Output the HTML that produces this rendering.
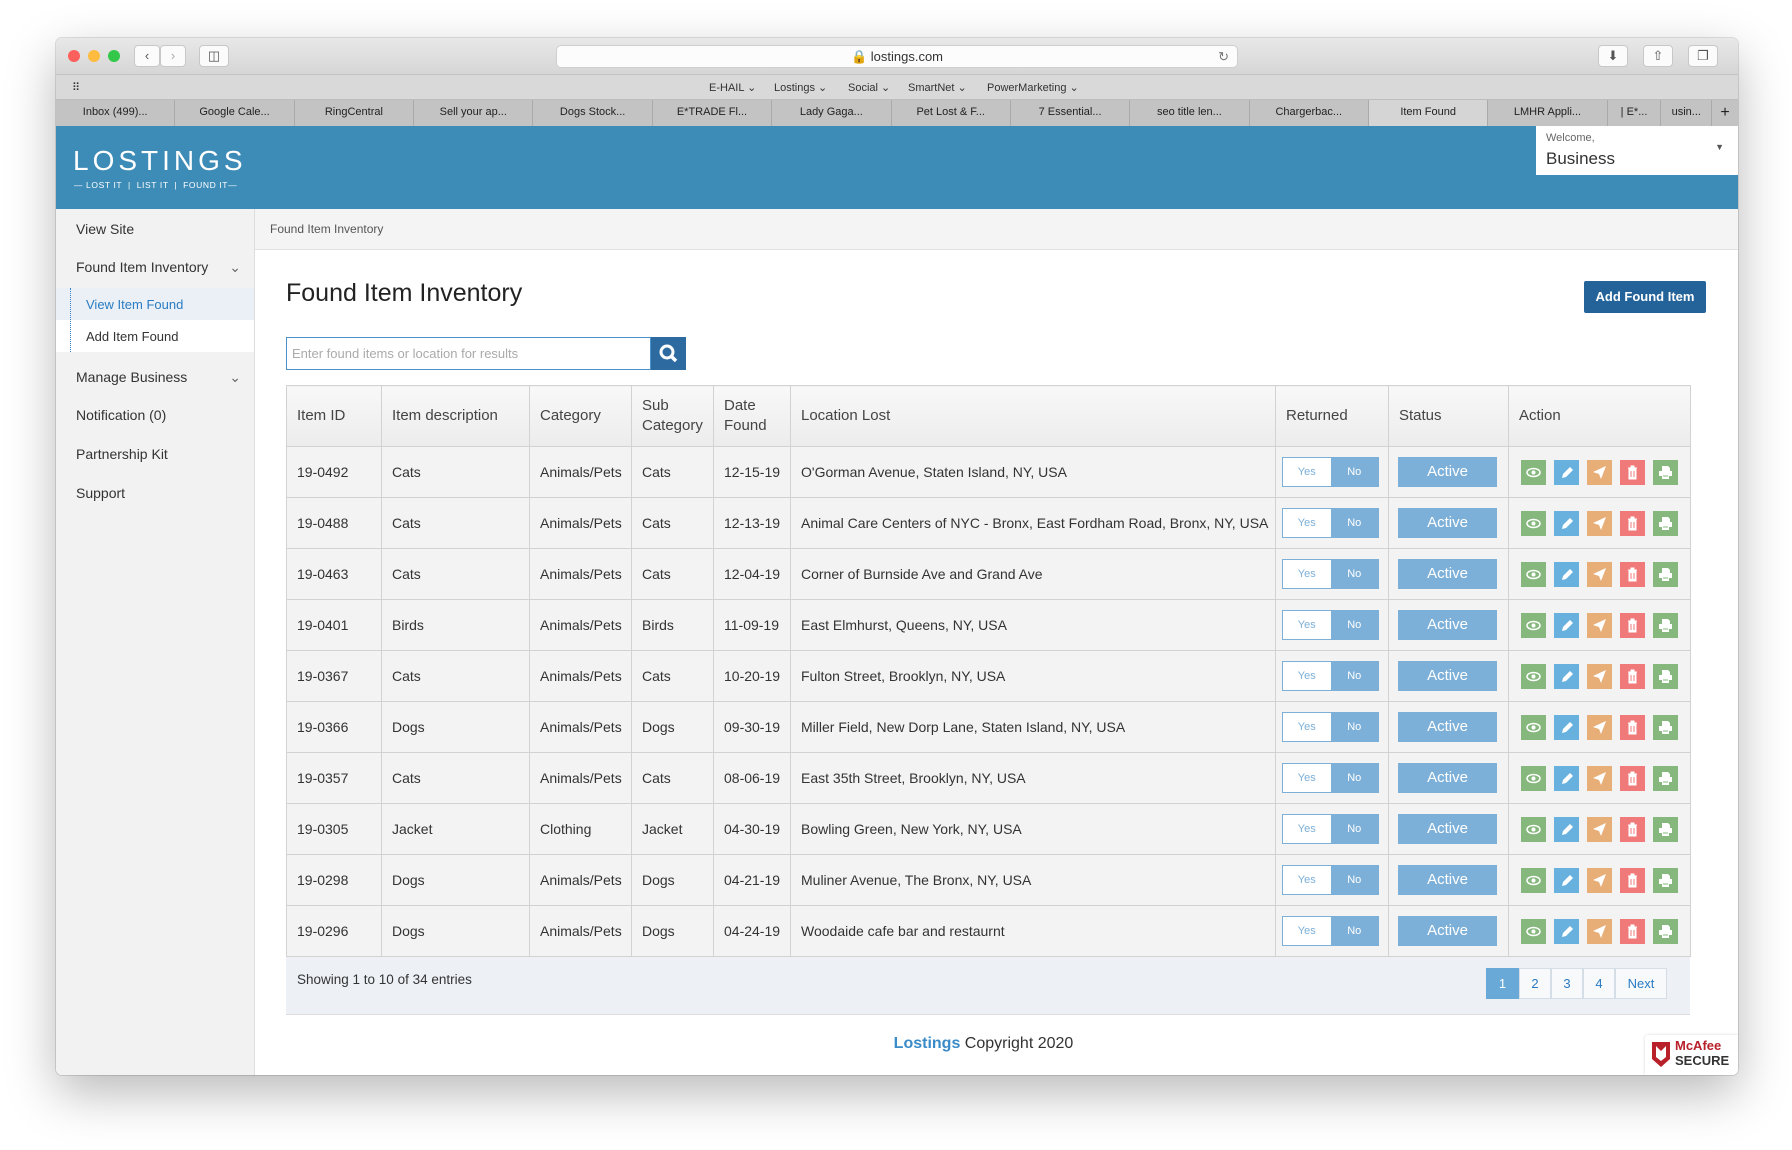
<!DOCTYPE html>
<html><head><meta charset="utf-8"><style>
*{box-sizing:border-box;margin:0;padding:0}
body{width:1792px;height:1150px;background:#fff;font-family:"Liberation Sans",sans-serif;position:relative;overflow:hidden}
.win{position:absolute;left:56px;top:38px;width:1682px;height:1037px;border-radius:6px;overflow:hidden;box-shadow:0 18px 50px rgba(0,0,0,.28),0 0 0 1px rgba(0,0,0,.12);background:#fff}
.title{position:absolute;left:0;top:0;width:100%;height:37px;background:linear-gradient(#e8e8e8,#d6d6d6);border-bottom:1px solid #c4c4c4}
.dot{position:absolute;top:12px;width:12px;height:12px;border-radius:50%}
.btn{position:absolute;top:7px;height:22px;background:#fbfbfb;border:1px solid #c8c8c8;border-radius:4px;font-size:13px;color:#555;text-align:center;line-height:20px}
.url{position:absolute;left:500px;top:7px;width:682px;height:23px;background:#fcfcfc;border:1px solid #cfcfcf;border-radius:5px;font-size:13px;color:#333;text-align:center;line-height:22px}
.bm{position:absolute;top:37px;width:100%;height:25px;background:#d9d9d9;border-bottom:1px solid #bdbdbd;font-size:11px;color:#333}
.bm span{position:absolute;top:6px}
.tabs{position:absolute;top:62px;width:100%;height:26px;background:#c3c3c3;display:flex;font-size:11px;color:#222}
.tab{width:120px;border-right:1px solid #aaa;text-align:center;line-height:25px;white-space:nowrap;overflow:hidden}
.hdr{position:absolute;top:88px;width:100%;height:83px;background:#3d8bb7}
.side{position:absolute;left:0;top:171px;width:199px;height:866px;background:#f2f2f2;border-right:1px solid #ddd;font-size:14px;color:#333}
.side div{position:absolute;left:20px}
.main{position:absolute;left:199px;top:171px;right:0;bottom:0;background:#fff}
.bc{height:41px;background:#f4f4f4;border-bottom:1px solid #e2e2e2;font-size:12px;color:#555;padding:13px 0 0 15px}
table{position:absolute;left:31px;top:176px;width:1404px;border-collapse:collapse;table-layout:fixed;font-size:14px;color:#333}
td,th{border:1px solid #d2d2d2;padding:0 10px;text-align:left;font-weight:normal;vertical-align:middle;white-space:nowrap;overflow:hidden}
th{height:61px;background:linear-gradient(#f8f8f8,#ececec);color:#444;font-size:15px;line-height:20px}
td{height:51px;background:#f3f3f3}
.tg{display:inline-flex;width:97px;height:30px;border:1px solid #7db0d8;font-size:11px;vertical-align:middle}
.tg b{font-weight:normal;flex:1;text-align:center;line-height:28px}
.act{display:inline-block;width:99px;height:30px;background:#7db0d8;color:#fff;text-align:center;line-height:30px;font-size:15px}
.ic{display:inline-block;width:25px;height:25px;margin-right:8px;vertical-align:middle;position:relative}
.ic svg{position:absolute;left:5px;top:5px}
</style></head><body>
<div class="win">
 <div class="title">
  <div class="dot" style="left:12px;background:#fc605c"></div><div class="dot" style="left:32px;background:#fdbc40"></div><div class="dot" style="left:52px;background:#34c84a"></div>
  <div class="btn" style="left:78px;width:26px">&#8249;</div><div class="btn" style="left:104px;width:26px;color:#aaa">&#8250;</div>
  <div class="btn" style="left:143px;width:30px">&#9707;</div>
  <div class="url">🔒 lostings.com<span style="position:absolute;right:8px;color:#777">&#8635;</span></div>
  <div class="btn" style="left:1542px;width:30px">&#11015;</div><div class="btn" style="left:1587px;width:30px">&#8679;</div><div class="btn" style="left:1632px;width:30px">&#10064;</div>
 </div>
 <div class="bm"><span style="left:16px;letter-spacing:-1px">⠿</span><span style="left:653px">E-HAIL ⌄</span><span style="left:718px">Lostings ⌄</span><span style="left:792px">Social ⌄</span><span style="left:852px">SmartNet ⌄</span><span style="left:931px">PowerMarketing ⌄</span></div>
 <div class="tabs">
  <div class="tab">Inbox (499)...</div><div class="tab">Google Cale...</div><div class="tab">RingCentral</div><div class="tab">Sell your ap...</div><div class="tab">Dogs Stock...</div><div class="tab">E*TRADE Fl...</div><div class="tab">Lady Gaga...</div><div class="tab">Pet Lost &amp; F...</div><div class="tab">7 Essential...</div><div class="tab">seo title len...</div><div class="tab">Chargerbac...</div><div class="tab" style="background:#d5d5d5">Item Found</div><div class="tab">LMHR Appli...</div><div class="tab" style="width:54px">| E*...</div><div class="tab" style="width:51px">usin...</div><div class="tab" style="width:26px;border:0;font-size:16px">+</div>
 </div>
 <div class="hdr">
  <div style="position:absolute;left:17px;top:19px;color:#fff;font-size:28px;letter-spacing:4px">LOSTINGS</div>
  <div style="position:absolute;left:18px;top:54px;color:#fff;font-size:8.5px;letter-spacing:.6px">— LOST IT &nbsp;| &nbsp;LIST IT &nbsp;| &nbsp;FOUND IT—</div>
  <div style="position:absolute;right:0;top:0;width:202px;height:49px;background:#fff">
   <div style="position:absolute;left:10px;top:6px;font-size:11px;color:#666">Welcome,</div>
   <div style="position:absolute;left:10px;top:23px;font-size:17px;color:#333">Business</div>
   <div style="position:absolute;right:14px;top:16px;font-size:9px;color:#555">▼</div>
  </div>
 </div>
 <div class="side">
  <div style="top:12px">View Site</div>
  <div style="top:50px;width:165px">Found Item Inventory<span style="float:right;color:#666">⌄</span></div>
  <div style="left:0;top:79px;width:198px;height:32px;background:#eaf0f6"></div>
  <div style="left:0;top:111px;width:198px;height:32px;background:#fff"></div>
  <div style="left:14px;top:79px;height:64px;border-left:1px dotted #3a82c4"></div>
  <div style="top:88px;left:30px;color:#2a7bc3;font-size:13px">View Item Found</div>
  <div style="top:120px;left:30px;font-size:13px">Add Item Found</div>
  <div style="top:160px;width:165px">Manage Business<span style="float:right;color:#666">⌄</span></div>
  <div style="top:198px">Notification (0)</div>
  <div style="top:237px">Partnership Kit</div>
  <div style="top:276px">Support</div>
 </div>
 <div class="main">
  <div class="bc">Found Item Inventory</div>
  <div style="position:absolute;left:31px;top:70px;font-size:25px;color:#222">Found Item Inventory</div>
  <div style="position:absolute;left:1329px;top:72px;width:122px;height:32px;background:#24639a;color:#fff;font-size:13px;font-weight:bold;text-align:center;line-height:32px;border-radius:2px">Add Found Item</div>
  <div style="position:absolute;left:31px;top:128px;width:365px;height:33px;border:1px solid #4a92cc;font-size:13px;color:#aaa;padding:8px 5px">Enter found items or location for results</div>
  <div style="position:absolute;left:396px;top:128px;width:35px;height:33px;background:#2c6a9f"><svg width="35" height="33"><circle cx="16" cy="15" r="6" fill="none" stroke="#fff" stroke-width="3"/><line x1="20" y1="19" x2="25" y2="24" stroke="#fff" stroke-width="3.5"/></svg></div>
  <table>
   <colgroup><col style="width:95px"><col style="width:148px"><col style="width:102px"><col style="width:82px"><col style="width:77px"><col style="width:485px"><col style="width:113px"><col style="width:120px"><col style="width:182px"></colgroup>
   <tr><th>Item ID</th><th>Item description</th><th>Category</th><th>Sub<br>Category</th><th>Date<br>Found</th><th>Location Lost</th><th>Returned</th><th>Status</th><th>Action</th></tr>
   <tbody id="tb"></tbody>
  </table>
  <div style="position:absolute;left:31px;top:748px;width:1404px;height:58px;background:#edf1f6;border-bottom:1px solid #ddd">
   <div style="position:absolute;left:11px;top:15px;font-size:13.5px;color:#333">Showing 1 to 10 of 34 entries</div>
   <div style="position:absolute;left:1200px;top:11px;display:flex;height:31px;font-size:13px;color:#2a7bc3">
    <div style="width:33px;background:#68a9d8;color:#fff;text-align:center;line-height:31px">1</div>
    <div style="width:32px;border:1px solid #d5dde6;background:#f7f9fb;text-align:center;line-height:29px">2</div>
    <div style="width:32px;border:1px solid #d5dde6;background:#f7f9fb;text-align:center;line-height:29px">3</div>
    <div style="width:32px;border:1px solid #d5dde6;background:#f7f9fb;text-align:center;line-height:29px">4</div>
    <div style="width:52px;border:1px solid #d5dde6;background:#f7f9fb;text-align:center;line-height:29px">Next</div>
   </div>
  </div>
  <div style="position:absolute;left:0;right:0;top:826px;text-align:center;font-size:16px;color:#333;padding-right:26px"><b style="color:#3a8bc8">Lostings</b> Copyright 2020</div>
  <div style="position:absolute;right:0;top:826px;width:93px;height:40px;background:#fff;border-top-left-radius:3px;box-shadow:0 0 3px rgba(0,0,0,.15)">
   <svg width="20" height="28" style="position:absolute;left:6px;top:5px"><path d="M1 2h18v17l-9 8-9-8z" fill="#b8202a"/><path d="M5 6v11l5 4 5-4V6l-5 5z" fill="#fff"/></svg>
   <div style="position:absolute;left:30px;top:3px;font-size:13px;font-weight:bold;color:#b8202a">McAfee</div>
   <div style="position:absolute;left:30px;top:18px;font-size:13px;font-weight:bold;color:#333">SECURE</div>
  </div>
 </div>
</div>
<script>
var d=[["19-0492","Cats","Animals/Pets","Cats","12-15-19","O'Gorman Avenue, Staten Island, NY, USA"],["19-0488","Cats","Animals/Pets","Cats","12-13-19","Animal Care Centers of NYC - Bronx, East Fordham Road, Bronx, NY, USA"],["19-0463","Cats","Animals/Pets","Cats","12-04-19","Corner of Burnside Ave and Grand Ave"],["19-0401","Birds","Animals/Pets","Birds","11-09-19","East Elmhurst, Queens, NY, USA"],["19-0367","Cats","Animals/Pets","Cats","10-20-19","Fulton Street, Brooklyn, NY, USA"],["19-0366","Dogs","Animals/Pets","Dogs","09-30-19","Miller Field, New Dorp Lane, Staten Island, NY, USA"],["19-0357","Cats","Animals/Pets","Cats","08-06-19","East 35th Street, Brooklyn, NY, USA"],["19-0305","Jacket","Clothing","Jacket","04-30-19","Bowling Green, New York, NY, USA"],["19-0298","Dogs","Animals/Pets","Dogs","04-21-19","Muliner Avenue, The Bronx, NY, USA"],["19-0296","Dogs","Animals/Pets","Dogs","04-24-19","Woodaide cafe bar and restaurnt"]];
var ic='<span class="ic" style="background:#86b87e"><svg width="15" height="15"><ellipse cx="7.5" cy="7.5" rx="6.5" ry="4" fill="none" stroke="#fff" stroke-width="1.5"/><circle cx="7.5" cy="7.5" r="2" fill="#fff"/></svg></span><span class="ic" style="background:#68b0dd"><svg width="15" height="15"><path d="M3 13l1-4 7-7 3 3-7 7z" fill="#fff"/></svg></span><span class="ic" style="background:#e8ae78"><svg width="15" height="15"><path d="M1 7L14 1 9 14 7 9z" fill="#fff"/></svg></span><span class="ic" style="background:#f07a7a"><svg width="15" height="15"><path d="M3 3h9M6 3V1h3v2M4 4h7v10H4z" fill="#fff" stroke="#fff"/><path d="M6 6v6M9 6v6" stroke="#f07a7a"/></svg></span><span class="ic" style="background:#86b87e;margin-right:0"><svg width="15" height="15"><path d="M4 1h6l2 2v3H4zM1 6h13v5H1zM4 10h7v4H4z" fill="#fff"/><path d="M5 11h5" stroke="#86b87e"/></svg></span>';
var h='';d.forEach(function(r){h+='<tr>';r.forEach(function(c){h+='<td>'+c+'</td>'});h+='<td style="padding-left:6px"><span class="tg"><b style="background:#fff;color:#7db0d8">Yes</b><b style="background:#7db0d8;color:#fff">No</b></span></td><td style="padding-left:9px"><span class="act">Active</span></td><td style="padding-left:12px">'+ic+'</td></tr>'});
document.getElementById('tb').innerHTML=h;
</script>
</body></html>
